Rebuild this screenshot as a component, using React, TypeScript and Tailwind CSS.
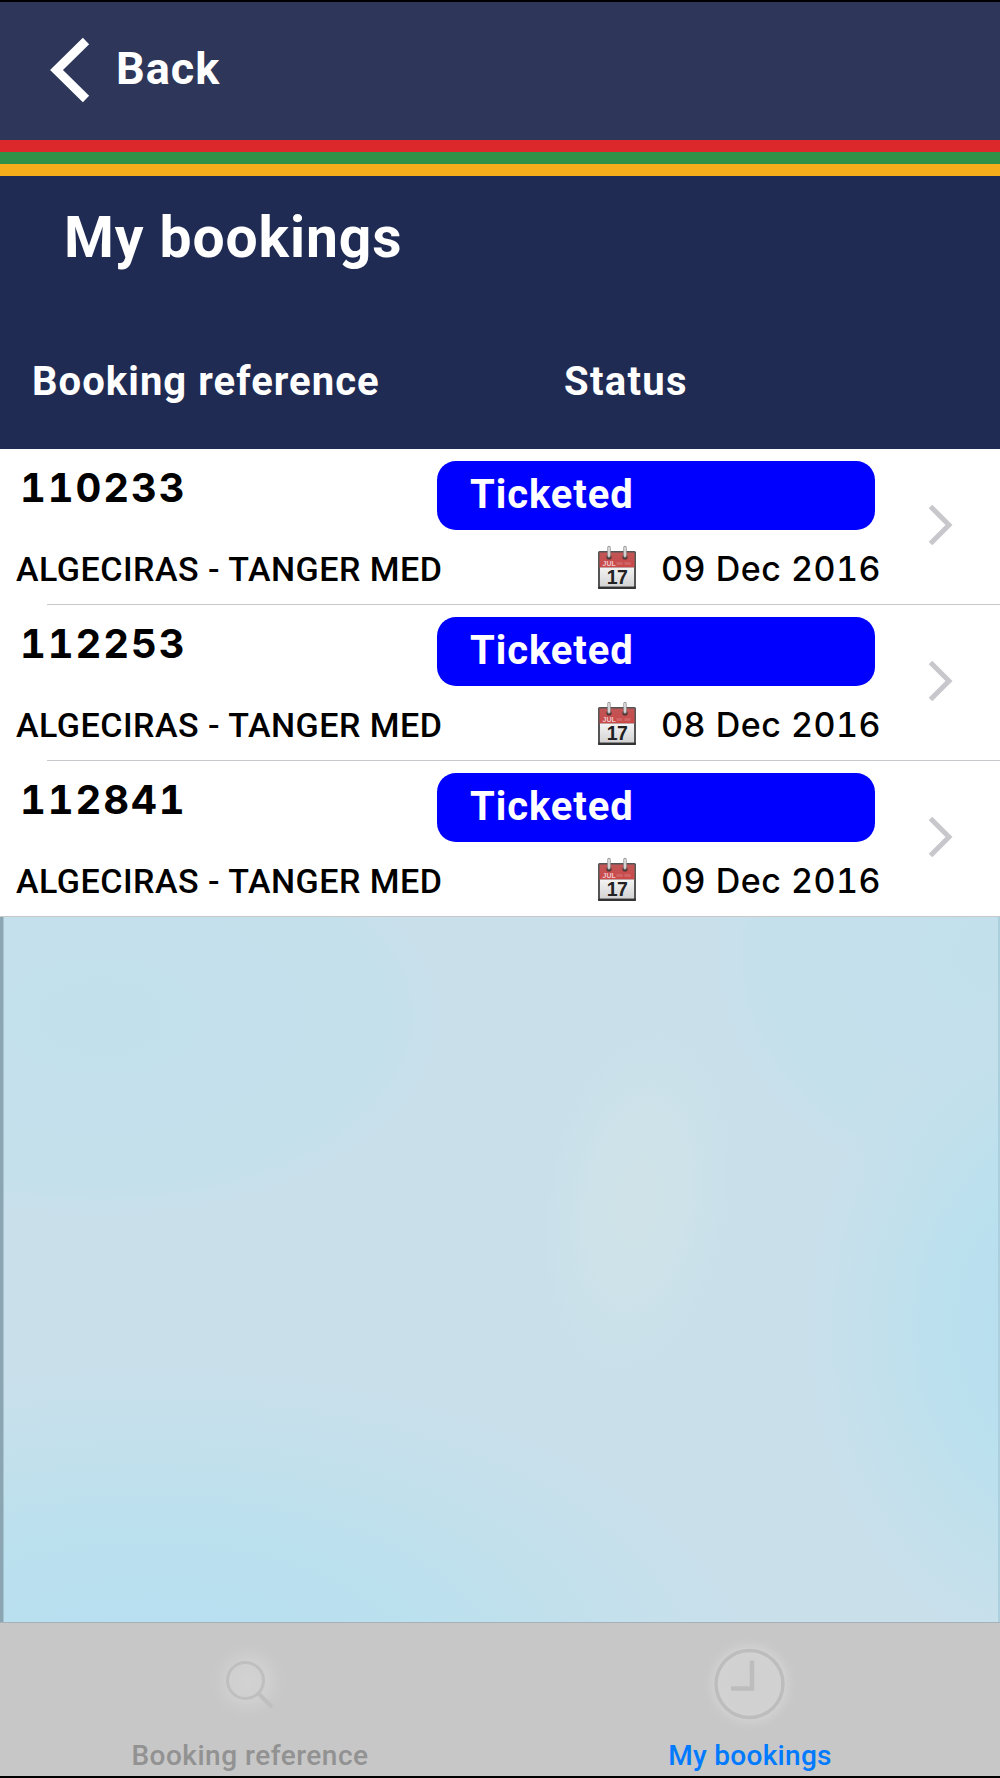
const bookings = [
  { reference: '110233', status: 'Ticketed', route: 'ALGECIRAS - TANGER MED', date: '09 Dec 2016' },
  { reference: '112253', status: 'Ticketed', route: 'ALGECIRAS - TANGER MED', date: '08 Dec 2016' },
  { reference: '112841', status: 'Ticketed', route: 'ALGECIRAS - TANGER MED', date: '09 Dec 2016' },
];

const BackIcon = () => (
  <svg width="42" height="66" viewBox="0 0 42 66" fill="none" className="shrink-0">
    <path d="M36 4 L6.5 33 L36 62" stroke="#fff" strokeWidth="9" />
  </svg>
);

const ChevronIcon = () => (
  <svg width="26" height="42" viewBox="0 0 26 42" fill="none" className="shrink-0">
    <path d="M3.5 2.5 L22 21 L3.5 39.5" stroke="#c7c7cc" strokeWidth="5" />
  </svg>
);

const CalendarIcon = () => (
  <svg width="40" height="46" viewBox="0 0 40 46" className="mt-px shrink-0">
    <defs>
      <linearGradient id="paper" x1="0" y1="0" x2="0" y2="1">
        <stop offset="0" stopColor="#f4f4f4" />
        <stop offset="1" stopColor="#d3d3d3" />
      </linearGradient>
      <linearGradient id="band" x1="0" y1="0" x2="0" y2="1">
        <stop offset="0" stopColor="#c05656" />
        <stop offset="1" stopColor="#cc4848" />
      </linearGradient>
    </defs>
    <rect x="1" y="6" width="38" height="38" rx="1.5" fill="#555" />
    <rect x="1" y="41.5" width="38" height="2.5" rx="1" fill="#333" />
    <rect x="2.5" y="7.5" width="35" height="15" fill="url(#band)" />
    <rect x="3" y="22.5" width="34" height="19" fill="url(#paper)" />
    <circle cx="12" cy="12" r="2.6" fill="#4d3535" />
    <circle cx="28" cy="12" r="2.6" fill="#4d3535" />
    <path d="M12 2.5 V11 M28 2.5 V11" stroke="#999" strokeWidth="3.4" strokeLinecap="round" />
    <path d="M12 2.5 V11 M28 2.5 V11" stroke="#e2e2e2" strokeWidth="1.6" strokeLinecap="round" />
    <text x="5.5" y="21" fontSize="7" fontWeight="700" fill="#eecaca" fontFamily="Liberation Sans, sans-serif">JUL</text>
    <path d="M19.5 18.5 h6 M27.5 18.5 h6" stroke="#d06464" strokeWidth="3" />
    <text x="20" y="38.5" textAnchor="middle" fontSize="19.5" fontWeight="700" letterSpacing="-0.5" fill="#222" fontFamily="Liberation Sans, sans-serif">17</text>
  </svg>
);

const Backdrop = () => (
  <svg className="block h-full w-full" viewBox="0 0 1000 705" preserveAspectRatio="none">
    <defs>
      <radialGradient id="sky">
        <stop offset="0" stopColor="#b6dff1" />
        <stop offset="0.45" stopColor="#bbe0ee" />
        <stop offset="0.75" stopColor="#c2e0ec" stopOpacity="0.8" />
        <stop offset="1" stopColor="#c8e0eb" stopOpacity="0" />
      </radialGradient>
      <radialGradient id="mist">
        <stop offset="0" stopColor="#c2e0ec" />
        <stop offset="0.8" stopColor="#c4e0eb" />
        <stop offset="1" stopColor="#c8e0eb" stopOpacity="0" />
      </radialGradient>
      <radialGradient id="glow">
        <stop offset="0" stopColor="#cfe2e8" />
        <stop offset="0.5" stopColor="#cde2e9" />
        <stop offset="0.8" stopColor="#cbe1ea" stopOpacity="0.7" />
        <stop offset="1" stopColor="#c9e0eb" stopOpacity="0" />
      </radialGradient>
    </defs>
    <rect width="1000" height="705" fill="#c9e0eb" />
    <ellipse cx="100" cy="100" rx="360" ry="210" fill="url(#mist)" />
    <ellipse cx="1010" cy="40" rx="310" ry="250" fill="url(#mist)" />
    <ellipse cx="1070" cy="410" rx="280" ry="360" fill="url(#sky)" />
    <ellipse cx="150" cy="760" rx="640" ry="330" fill="url(#sky)" />
    <ellipse cx="637" cy="285" rx="98" ry="185" fill="url(#glow)" transform="rotate(9 637 285)" />
    <rect width="3.5" height="705" fill="#8ba5b2" />
    <rect x="998" width="2" height="705" fill="#acd0de" />
  </svg>
);

const SearchIcon = () => (
  <svg width="100" height="100" viewBox="0 0 100 100" fill="none">
    <defs>
      <radialGradient id="searchGlow">
        <stop offset="0" stopColor="#d2d2d2" />
        <stop offset="0.5" stopColor="#cfcfcf" />
        <stop offset="1" stopColor="#c7c7c7" stopOpacity="0" />
      </radialGradient>
    </defs>
    <circle cx="48" cy="51" r="42" fill="url(#searchGlow)" />
    <circle cx="45.5" cy="50.5" r="18" stroke="#bfbfbf" strokeWidth="3" />
    <path d="M58.5 63.5 L72 77" stroke="#bfbfbf" strokeWidth="4" />
  </svg>
);

const ClockIcon = () => (
  <svg width="100" height="100" viewBox="0 0 100 100" fill="none">
    <defs>
      <radialGradient id="clockGlow">
        <stop offset="0" stopColor="#d0d0d0" />
        <stop offset="0.7" stopColor="#d2d2d2" />
        <stop offset="1" stopColor="#c7c7c7" stopOpacity="0" />
      </radialGradient>
    </defs>
    <circle cx="50" cy="54" r="49" fill="url(#clockGlow)" />
    <circle cx="49.5" cy="54" r="33.5" stroke="#bdbdbd" strokeWidth="3.5" />
    <path d="M52 30.5 V58.5 H31" stroke="#bdbdbd" strokeWidth="4.5" />
  </svg>
);

const App = () => {
  return (
    <div className="flex h-[1778px] w-[1000px] flex-col overflow-hidden border-y-2 border-black bg-[#c7c7c7] font-['Roboto',sans-serif] whitespace-nowrap">
      {/* Navigation bar */}
      <header className="flex h-[137.5px] shrink-0 items-start bg-[#2e375a] pt-[35px] pl-[50px]">
        <BackIcon />
        <span className="ml-[24px] text-[45px] leading-[64px] font-bold tracking-[1px] text-white">Back</span>
      </header>
      <div className="h-3 shrink-0 bg-[#dc282b]"></div>
      <div className="h-3 shrink-0 bg-[#2f9148]"></div>
      <div className="h-[12.5px] shrink-0 bg-[#f5ad1b]"></div>

      {/* Title and column headings */}
      <div className="h-[273px] shrink-0 bg-[#202b54] text-white">
        <h1 className="pt-[26px] pl-[64px] text-[57px] leading-[72px] font-bold tracking-[0.9px]">My bookings</h1>
        <div className="flex pt-[80px] text-[40px] leading-[56px] font-bold">
          <span className="w-[530px] pl-[32px] tracking-[1.05px]">Booking reference</span>
          <span className="pl-[34px] tracking-[1.3px]">Status</span>
        </div>
      </div>

      {/* Booking list */}
      <ul className="shrink-0 bg-white">
        {bookings.map((booking, index) => (
          <li key={booking.reference}>
            <div className="flex h-[155px]">
              <div className="h-full w-[927px]">
                <div className="flex h-[81px] pt-[12px]">
                  <span className="w-[437px] pl-[20px] font-['Inter',sans-serif] text-[40px] leading-[53px] font-bold tracking-[1.9px] text-black tabular-nums">
                    {booking.reference}
                  </span>
                  <span className="h-[69px] w-[438px] rounded-[19px] bg-[#0000ff] pl-[33px] text-[40px] leading-[68px] font-bold tracking-[0.9px] text-white">
                    {booking.status}
                  </span>
                </div>
                <div className="flex h-[74px] pt-[14px] text-[34px] leading-[50px] font-medium text-black">
                  <span className="w-[597px] pl-[16px] tracking-[0.5px]">{booking.route}</span>
                  <CalendarIcon />
                  <span className="pl-[24px] font-['Inter',sans-serif] tracking-[0.5px] tabular-nums">{booking.date}</span>
                </div>
              </div>
              <div className="pt-[55px]">
                <ChevronIcon />
              </div>
            </div>
            <div className={index === bookings.length - 1 ? 'h-px bg-[#c8c7cc]' : 'ml-[47px] h-px bg-[#c8c7cc]'}></div>
          </li>
        ))}
      </ul>

      <div className="min-h-0 flex-1">
        <Backdrop />
      </div>

      {/* Tab bar */}
      <nav className="grid h-[154px] shrink-0 grid-cols-2 border-t border-[#a5b1b6] text-[28px] leading-[34px] font-medium">
        <div className="flex flex-col items-center pt-[7px] text-[#929292]">
          <SearchIcon />
          <span className="mt-[9px] tracking-[0.5px]">Booking reference</span>
        </div>
        <div className="flex flex-col items-center pt-[7px] text-[#007aff]">
          <ClockIcon />
          <span className="mt-[9px] tracking-[0.3px]">My bookings</span>
        </div>
      </nav>
    </div>
  );
};

export default App;
